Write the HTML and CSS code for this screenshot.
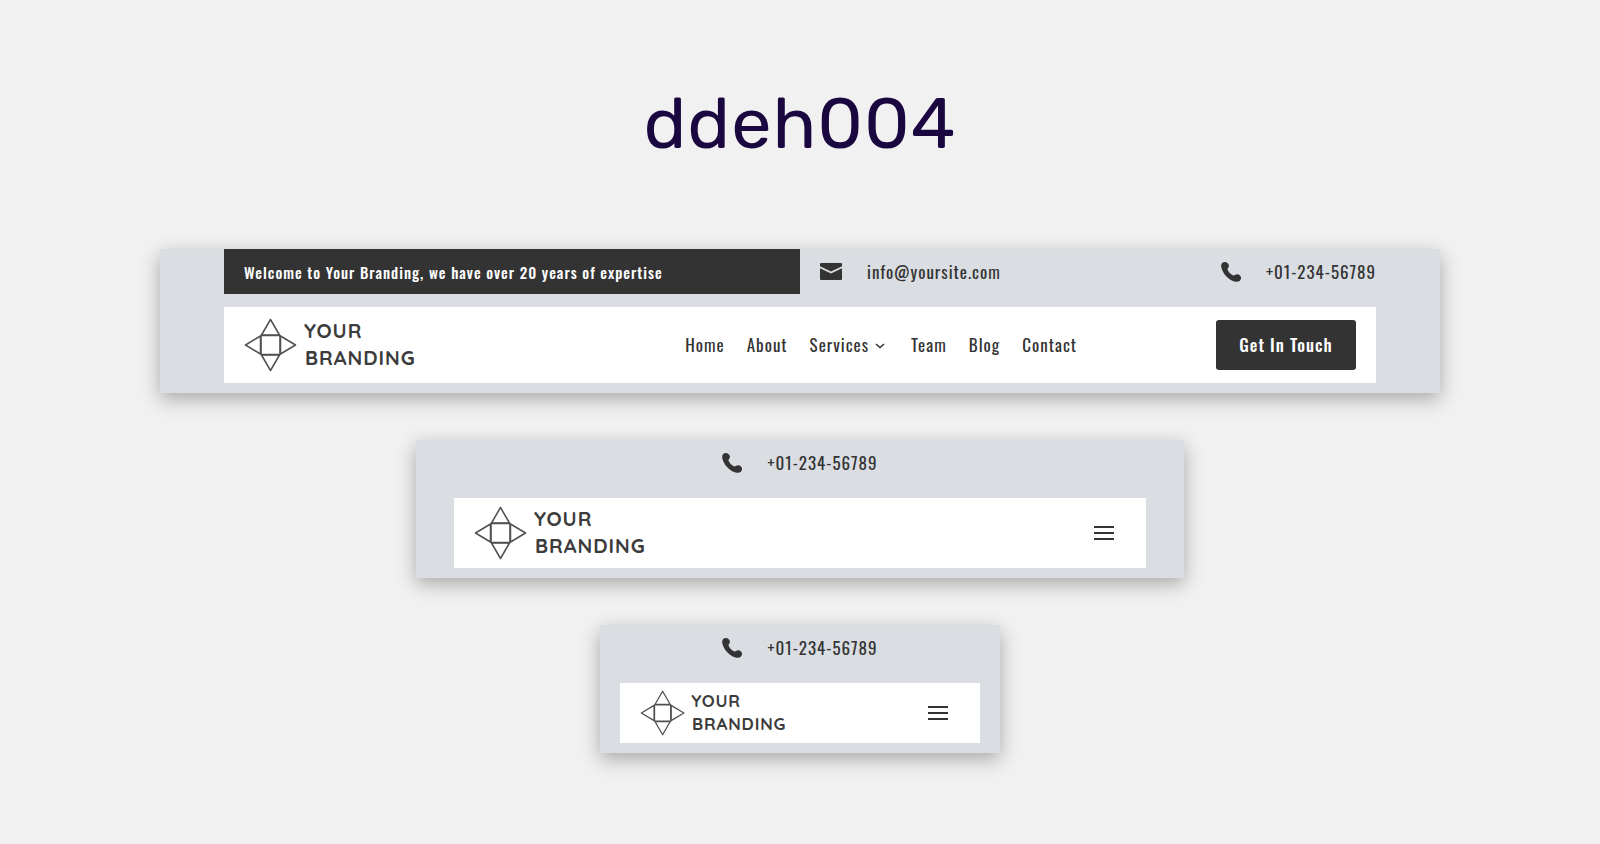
FILE: index.html
```html
<!DOCTYPE html>
<html lang="en">
<head>
<meta charset="utf-8">
<meta name="viewport" content="width=device-width, initial-scale=1">
<title>ddeh004</title>
<link rel="stylesheet" href="styles.css">
</head>
<body>
<svg class="defs" aria-hidden="true">
  <symbol id="phone" viewBox="0 0 20 20">
    <path d="M1 1.200C2.400-.2 5-.3 6.700 1.200C8.300 2.700 8.300 4.800 6.900 6.300C6.400 6.900 6.400 7.600 6.800 8.300C8 10.500 9.700 12.200 11.800 13.300C12.500 13.700 13.200 13.600 13.800 13.100C15.400 11.900 17.500 12 19 13.500C20.400 15 20.400 17.200 18.900 18.700C17.600 19.900 15.600 20.100 13.500 19.500C7.500 17.800 2 12.200.4 5.800C0 4 0 2.300 1 1.200Z"/>
  </symbol>
  <symbol id="mail" viewBox="0 0 22 17">
    <path d="M1 0H21Q22 0 22 1V3.200L11 8.400L0 3.200V1Q0 0 1 0ZM0 5.200L11 10.500L22 5.200V16Q22 17 21 17H1Q0 17 0 16Z"/>
  </symbol>
  <symbol id="logo" viewBox="0 0 176 54">
    <g fill="none" stroke="#505050" stroke-width="1.500" stroke-linejoin="round">
      <path d="M17 17.500H36V36.500H17Z"/>
      <path d="M17.500 17L26.500 1.500L35.500 17Z"/>
      <path d="M17.500 37L26.500 52.500L35.500 37Z"/>
      <path d="M16.500 18L1.500 27L16.500 36Z"/>
      <path d="M36.500 18L51.500 27L36.500 36Z"/>
    </g>
    <text class="logo-text" x="60" y="20">YOUR</text>
    <text class="logo-text" x="61" y="47">BRANDING</text>
  </symbol>
</svg>
<main class="page">
  <h1 class="title">ddeh004</h1>

  <header class="card card-desktop">
    <div class="topbar topbar-split">
      <p class="welcome">Welcome to Your Branding, we have over 20 years of expertise</p>
      <div class="contacts">
        <a class="contact" href="#"><svg class="icon-mail" aria-hidden="true"><use href="#mail"/></svg>info@yoursite.com</a>
        <a class="contact" href="#"><svg class="icon-phone" aria-hidden="true"><use href="#phone"/></svg>+01-234-56789</a>
      </div>
    </div>
    <div class="menu menu-desktop">
      <div class="menu-main">
        <a class="logo-link" href="#" aria-label="Your Branding"><svg class="logo"><use href="#logo"/></svg></a>
        <nav class="nav">
          <a href="#">Home</a>
          <a href="#">About</a>
          <a href="#">Services<svg class="chevron" viewBox="0 0 10 6" aria-hidden="true"><path d="M1 1L5 4.500L9 1"/></svg></a>
          <a href="#">Team</a>
          <a href="#">Blog</a>
          <a href="#">Contact</a>
        </nav>
      </div>
      <button class="cta" type="button">Get In Touch</button>
    </div>
  </header>

  <header class="card card-tablet">
    <div class="topbar">
      <a class="contact" href="#"><svg class="icon-phone" aria-hidden="true"><use href="#phone"/></svg>+01-234-56789</a>
    </div>
    <div class="menu menu-tablet">
      <a class="logo-link" href="#" aria-label="Your Branding"><svg class="logo"><use href="#logo"/></svg></a>
      <button class="burger" type="button" aria-label="Menu"><span></span><span></span><span></span></button>
    </div>
  </header>

  <header class="card card-phone">
    <div class="topbar">
      <a class="contact" href="#"><svg class="icon-phone" aria-hidden="true"><use href="#phone"/></svg>+01-234-56789</a>
    </div>
    <div class="menu menu-phone">
      <a class="logo-link" href="#" aria-label="Your Branding"><svg class="logo logo-small"><use href="#logo"/></svg></a>
      <button class="burger" type="button" aria-label="Menu"><span></span><span></span><span></span></button>
    </div>
  </header>
</main>
</body>
</html>
```
FILE: styles.css
```css
* {
  box-sizing: border-box;
}

body {
  margin: 0;
  background: #f1f1f1;
  color: #333;
  font-family: Oswald, "Roboto Condensed", "Liberation Sans Narrow", sans-serif;
  font-size: 17px;
  font-weight: 400;
  line-height: 24px;
  letter-spacing: 1px;
}

a {
  color: inherit;
  text-decoration: none;
}

.defs {
  display: none;
}

.page {
  display: flex;
  flex-direction: column;
  align-items: center;
  gap: 47px;
  padding: 82px 0;
}

.title {
  margin: 0 0 36px;
  color: #1b0740;
  font-family: Rubik, Inter, sans-serif;
  font-size: 72px;
  font-weight: 400;
  line-height: 84px;
  letter-spacing: 1px;
}

.card {
  padding-bottom: 10px;
  background: #dadde2;
  box-shadow: 0 6px 18px rgba(0, 0, 0, 0.3);
}

.card-desktop {
  width: 80%;
  padding-inline: 4%;
}

.card-tablet {
  width: 48%;
  padding-inline: 38px;
}

.card-phone {
  width: 25%;
  min-width: 320px;
  padding-inline: 20px;
}

.topbar {
  display: flex;
  justify-content: center;
  min-height: 45px;
  margin-bottom: 13px;
}

.topbar-split {
  display: grid;
  grid-template-columns: 1fr 1fr;
}

.welcome {
  margin: 0;
  padding: 11px 20px 10px;
  background: #333;
  color: #fff;
  font-size: 15px;
  font-weight: 500;
}

.contacts {
  display: flex;
  justify-content: space-between;
  padding-left: 20px;
}

.contact {
  display: flex;
  align-items: center;
  gap: 25px;
}

.icon-mail {
  width: 22px;
  height: 17px;
  fill: #333;
}

.icon-phone {
  width: 20px;
  height: 20px;
  fill: #333;
}

.menu {
  display: flex;
  align-items: center;
  justify-content: space-between;
  padding-left: 20px;
  background: #fff;
}

.menu-desktop {
  padding: 13px 20px;
}

.menu-tablet {
  min-height: 70px;
  padding-right: 32px;
}

.menu-phone {
  min-height: 60px;
  padding-right: 32px;
}

.menu-main {
  display: flex;
  align-items: center;
  justify-content: space-between;
  width: 76%;
}

.logo-link {
  display: flex;
}

.logo {
  width: 176px;
  height: 54px;
  margin: -2px 0;
}

.logo-small {
  width: 150px;
  height: 46px;
}

.logo-text {
  fill: #3c3c3c;
  font-family: Quicksand, Lato, sans-serif;
  font-size: 20px;
  font-weight: 700;
  letter-spacing: 1px;
}

.nav {
  display: flex;
  gap: 22px;
  padding-right: 12px;
}

.nav a {
  display: flex;
  align-items: center;
}

.chevron {
  width: 10px;
  height: 6px;
  margin: 2px 4px 0 6px;
  fill: none;
  stroke: #333;
  stroke-width: 1.500;
}

.cta {
  width: 140px;
  height: 50px;
  padding: 0;
  border: 0;
  border-radius: 3px;
  background: #333;
  color: #fff;
  font: inherit;
  font-weight: 500;
  letter-spacing: 1px;
}

.burger {
  display: flex;
  flex-direction: column;
  gap: 4px;
  padding: 0;
  border: 0;
  background: none;
}

.burger span {
  width: 20px;
  height: 2px;
  background: #333;
}
```
